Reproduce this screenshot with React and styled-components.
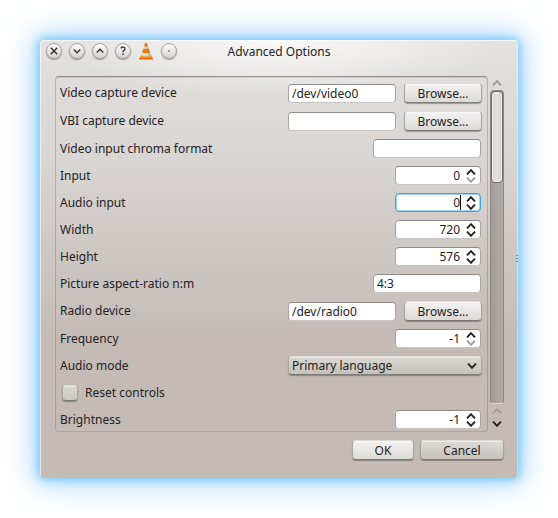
import React from "react";
import styled, { createGlobalStyle, css } from "styled-components";

const GlobalStyle = createGlobalStyle`
  *, *::before, *::after { box-sizing: border-box; }
  body { margin: 0; background: #fff; }
  body, button, input, select {
    font: 12px/18px "Noto Sans", "Open Sans", sans-serif;
    color: #26221f;
  }
`;

const Desktop = styled.main`
  padding: 40px;
`;

const Dialog = styled.section`
  border-radius: 4px;
  padding: 0 14px 18px 15px;
  background:
    radial-gradient(ellipse 220px 60px at 50% 0, rgba(255, 255, 255, 0.8), rgba(255, 255, 255, 0)),
    linear-gradient(#e4e3e1, #dedbd8 50px, #d9d5d2 120px, #cbc5c1 230px, #c4bbb7 300px);
  box-shadow:
    inset 1px 1px 0 rgba(255, 255, 255, 0.6),
    inset -1px 0 0 rgba(255, 255, 255, 0.4),
    0 0 8px 2px #7accfa,
    0 0 30px 7px #b2d8fd;
  position: relative;
`;

const TitleBar = styled.header`
  display: grid;
  grid-template-columns: 1fr auto 1fr;
  height: 36px;
  padding-top: 2px;
  margin-left: -9px;
  margin-right: -8px;
`;

const WindowButtons = styled.div`
  display: flex;
  gap: 7px;
  height: 18px;
  align-items: center;
`;

const RoundButton = styled.button`
  width: 16px;
  height: 16px;
  padding: 0;
  border: 1px solid #a3a09e;
  border-radius: 50%;
  background: linear-gradient(#fcfcfb, #d4d2cf);
  box-shadow: 0 1px 1px rgba(0, 0, 0, 0.35);
  display: grid;
  place-items: center;
`;

const Title = styled.h1`
  margin: 0;
  padding-top: 1px;
  font-size: 12px;
  font-weight: 400;
  line-height: 18px;
`;

const Content = styled.div`
  display: flex;
  gap: 2px;
`;

const Frame = styled.form`
  flex: 1;
  display: flex;
  flex-direction: column;
  gap: 8px;
  padding: 6px 5px 2px 4px;
  border: 1px solid rgba(90, 80, 76, 0.28);
  border-top-color: rgba(80, 72, 68, 0.55);
  border-bottom-color: rgba(90, 80, 76, 0.2);
  border-radius: 4px;
  box-shadow: inset 0 1px 1px rgba(80, 72, 68, 0.15);
`;

const Row = styled.div`
  display: flex;
  align-items: center;
  gap: 7px;
  height: ${(p) => (p.$tall ? "20px" : "19px")};
`;

const Label = styled.label`
  flex: 1;
  white-space: nowrap;
`;

const field = css`
  height: 19px;
  margin: 0 1px 0 0;
  border: 1px solid #a8a4a1;
  border-top-color: #8f8b88;
  border-bottom-color: #c9c5c2;
  border-radius: 4px;
  background: #fff;
`;

const TextField = styled.input`
  ${field}
  width: 108px;
  padding: 0 3px;
  outline: 0;
`;

const raised = css`
  border: 1px solid #a8a4a0;
  border-top-color: #dddbd8;
  border-bottom-color: #7e7a77;
  border-radius: 4px;
  box-shadow: 0 1px 1px rgba(0, 0, 0, 0.3), inset 0 1px 0 rgba(255, 255, 255, 0.5);
`;

const Button = styled.button`
  ${raised}
  height: 20px;
  padding: 0;
  line-height: 17px;
  width: ${(p) => p.$width};
  background: ${(p) => (p.$dim ? "linear-gradient(#dddad6, #c6c2bc)" : "linear-gradient(#f3f2f1, #dcdad6)")};
`;

const Select = styled.select`
  ${raised}
  appearance: none;
  width: 194px;
  height: 19px;
  padding: 0 20px 0 3px;
  line-height: 16px;
  background: linear-gradient(#dbd8d4, #c5c1bb);
`;

const SelectWrap = styled.div`
  display: grid;
  align-items: center;
  & > * { grid-area: 1 / 1; }
  & > svg { justify-self: end; margin-right: 5px; pointer-events: none; }
`;

const Spin = styled.div`
  ${field}
  width: 86px;
  display: flex;
  align-items: center;
  ${(p) => p.$focused && css`
    border-color: #3ba3d8;
    box-shadow: inset 0 0 0 1px #9ed4f2;
  `}
`;

const SpinInput = styled.input`
  flex: 1;
  min-width: 0;
  height: 17px;
  padding: 0;
  border: 0;
  outline: 0;
  background: none;
  text-align: right;
`;

const Caret = styled.span`
  width: 1px;
  height: 15px;
  background: ${(p) => (p.$visible ? "#000" : "transparent")};
`;

const Stepper = styled.div`
  display: flex;
  flex-direction: column;
  gap: 2px;
  margin: 0 4px 0 5px;
`;

const Step = styled.button`
  display: block;
  height: 6px;
  padding: 0;
  border: 0;
  background: none;
  & svg { display: block; }
`;

const CheckBox = styled.input`
  ${raised}
  appearance: none;
  width: 16px;
  height: 16px;
  margin: 0 0 0 2px;
  background: linear-gradient(#d8d6d2, #cac7c2);
`;

const ScrollBar = styled.div`
  width: 14px;
  display: flex;
  flex-direction: column;
  align-items: center;
  padding: 4px 0 5px;
`;

const Groove = styled.div`
  flex: 1;
  width: 14px;
  margin: 4px 0;
  border: 1px solid #8d8784;
  border-bottom-color: #dcd8d5;
  border-radius: 4px;
  background: linear-gradient(90deg, #a39b98, #b3aba8);
`;

const Thumb = styled.div`
  height: 92px;
  border: 1px solid #6f6a67;
  border-radius: 4px;
  background: linear-gradient(90deg, #d6d3d0, #e6e4e2, #d3d0cd);
  box-shadow: inset 0 0 0 1px #f1f0ee;
`;

const ScrollStep = styled(Step)`
  margin-bottom: ${(p) => (p.$spaced ? "7px" : "0")};
`;

const Footer = styled.footer`
  display: flex;
  justify-content: flex-end;
  gap: 6px;
  padding-top: 8px;
`;

const Grip = styled.span`
  position: absolute;
  right: 0;
  top: 49%;
  width: 2px;
  height: 9px;
  background: repeating-linear-gradient(#8f8a87 0 1px, transparent 1px 3px);
`;

function Chevron({ up, faded }) {
  return (
    <svg width="10" height="6" viewBox="0 0 10 6" fill="none" aria-hidden="true">
      <path d={up ? "M1 5.4 5 1.2 9 5.4" : "M1 .6 5 4.8 9 .6"} stroke={faded ? "#a09b98" : "#25211f"} strokeWidth="1.9" />
    </svg>
  );
}

const glyphs = {
  Close: <path d="M3.8 3.8 10.2 10.2M10.2 3.8 3.8 10.2" />,
  Minimize: <path d="M3.8 5.6 7 8.8 10.2 5.6" />,
  Maximize: <path d="M3.8 8.4 7 5.2 10.2 8.4" />,
  Help: <path d="M5 4.4C5.2 2.5 9.1 2.6 8.9 4.9 8.8 6.3 7 6.4 7 8.3M7 9.6V11" />,
  Menu: <circle cx="7" cy="7" r="0.4" strokeWidth="0.8" />,
};

function WindowButton({ name }) {
  return (
    <RoundButton type="button" aria-label={name}>
      <svg width="14" height="14" viewBox="0 0 14 14" fill="none" stroke="#35312e" strokeWidth="1.4">
        {glyphs[name]}
      </svg>
    </RoundButton>
  );
}

function Cone() {
  return (
    <svg width="16" height="18" viewBox="0 0 16 18" aria-hidden="true">
      <path d="M3 12.5H13L14.8 17.2H1.2Z" fill="#f79a1c" />
      <path d="M1.2 15.8H14.8V17.4H1.2Z" fill="#dd6c00" />
      <path d="M7 1H9L12.8 13.2Q8 16 3.2 13.2Z" fill="#dcdcdd" />
      <path d="M7 1H9L10 4.2Q8 5.1 6 4.2Z" fill="#f07c12" />
      <path d="M5.3 6.8H10.7L11.8 10.4Q8 12.3 4.2 10.4Z" fill="#f07c12" />
      <path d="M9 4.5 10 4.2 12.8 13.2 10.5 14.2Z" fill="#6a4a35" opacity=".22" />
    </svg>
  );
}

function PathRow({ id, label, value }) {
  return (
    <Row $tall>
      <Label htmlFor={id}>{label}</Label>
      <TextField id={id} defaultValue={value} />
      <Button type="button" $width="78px">Browse...</Button>
    </Row>
  );
}

function TextRow({ id, label, value }) {
  return (
    <Row>
      <Label htmlFor={id}>{label}</Label>
      <TextField id={id} defaultValue={value} />
    </Row>
  );
}

function SpinRow({ id, label, value, atMinimum, focused }) {
  return (
    <Row>
      <Label htmlFor={id}>{label}</Label>
      <Spin $focused={focused}>
        <SpinInput id={id} inputMode="numeric" defaultValue={value} />
        <Caret $visible={focused} />
        <Stepper>
          <Step type="button" aria-label={`Increase ${label}`}><Chevron up /></Step>
          <Step type="button" aria-label={`Decrease ${label}`} disabled={atMinimum}><Chevron faded={atMinimum} /></Step>
        </Stepper>
      </Spin>
    </Row>
  );
}

export default function App() {
  return (
    <>
      <GlobalStyle />
      <Desktop>
        <Dialog role="dialog" aria-labelledby="title">
          <TitleBar>
            <WindowButtons>
              <WindowButton name="Close" />
              <WindowButton name="Minimize" />
              <WindowButton name="Maximize" />
              <WindowButton name="Help" />
              <Cone />
              <WindowButton name="Menu" />
            </WindowButtons>
            <Title id="title">Advanced Options</Title>
          </TitleBar>
          <Content>
            <Frame>
              <PathRow id="video" label="Video capture device" value="/dev/video0" />
              <PathRow id="vbi" label="VBI capture device" value="" />
              <TextRow id="chroma" label="Video input chroma format" value="" />
              <SpinRow id="input" label="Input" value="0" atMinimum />
              <SpinRow id="audio" label="Audio input" value="0" focused />
              <SpinRow id="width" label="Width" value="720" />
              <SpinRow id="height" label="Height" value="576" />
              <TextRow id="aspect" label="Picture aspect-ratio n:m" value="4:3" />
              <PathRow id="radio" label="Radio device" value="/dev/radio0" />
              <SpinRow id="frequency" label="Frequency" value="-1" atMinimum />
              <Row>
                <Label htmlFor="mode">Audio mode</Label>
                <SelectWrap>
                  <Select id="mode"><option>Primary language</option></Select>
                  <Chevron />
                </SelectWrap>
              </Row>
              <Row>
                <CheckBox type="checkbox" id="reset" />
                <Label htmlFor="reset">Reset controls</Label>
              </Row>
              <SpinRow id="brightness" label="Brightness" value="-1" />
            </Frame>
            <ScrollBar>
              <ScrollStep type="button" aria-label="Scroll up"><Chevron up faded /></ScrollStep>
              <Groove><Thumb /></Groove>
              <ScrollStep type="button" aria-label="Scroll up" $spaced><Chevron up faded /></ScrollStep>
              <ScrollStep type="button" aria-label="Scroll down"><Chevron /></ScrollStep>
            </ScrollBar>
          </Content>
          <Footer>
            <Button type="button" $width="62px">OK</Button>
            <Button type="button" $width="84px" $dim>Cancel</Button>
          </Footer>
          <Grip />
        </Dialog>
      </Desktop>
    </>
  );
}
